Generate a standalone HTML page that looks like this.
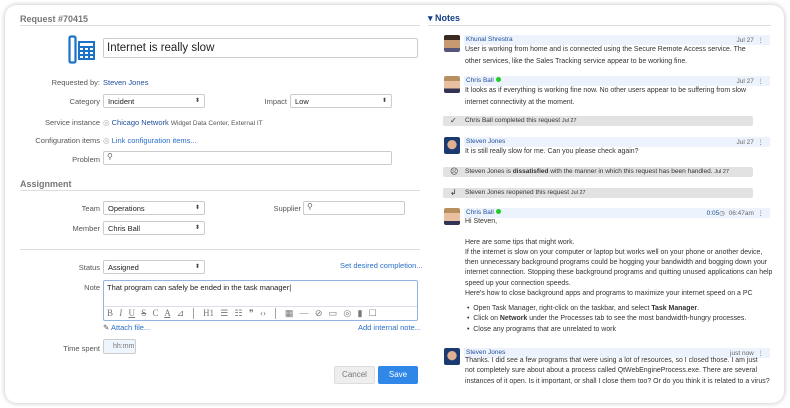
<!DOCTYPE html><html><head><meta charset="utf-8"><style>
*{box-sizing:border-box;margin:0;padding:0}
body{width:790px;height:408px;background:#fff;font-family:"Liberation Sans",sans-serif;position:relative;overflow:hidden;color:#222}
.card{position:absolute;left:5px;top:5px;width:779px;height:398px;border-radius:12px;box-shadow:0 0 4px 1px rgba(0,0,0,.18);background:#fff}
.a{position:absolute;white-space:nowrap}
.lbl{font-size:7.5px;color:#555;text-align:right;width:100px;left:0}
.h{font-size:9px;color:#777;font-weight:bold}
.hr{position:absolute;height:1px;background:#ddd}
.sel{position:absolute;height:14px;border:1px solid #ccc;border-radius:2px;font-size:7.5px;padding:2px 4px;background:#fff}
.sel:after{content:"⬍";position:absolute;right:4px;top:2px;font-size:6px;color:#444}
.inp{position:absolute;border:1px solid #ccc;border-radius:2px;background:#fff}
.lnk{color:#2a6fc9;font-size:7.5px}
.nm{color:#1f4e9a}
.bar{position:absolute;left:464px;width:306px;height:10px;background:#edf3fc;font-size:6.5px;padding:1px 2px;color:#1f4e9a}
.bar .r{position:absolute;right:6px;top:1px;color:#666}
.t{position:absolute;left:465px;font-size:6.95px;line-height:12.2px;color:#333;white-space:nowrap}
.ev{position:absolute;left:443px;width:310px;height:10px;background:#e2e2e2;border-radius:2px;font-size:6.5px;padding:1px 0 0 22px;color:#333;white-space:nowrap}
.ev i{position:absolute;left:7px;top:0;font-style:normal;font-size:8px}
.av{position:absolute;left:444px;width:16px;height:17px;border-radius:2px}
.dot{display:inline-block;width:5px;height:5px;border-radius:50%;background:#2c2;margin-left:2px}
</style></head><body>
<div class="card"></div>
<div class="a h" style="left:20px;top:14px">Request #70415</div>
<div class="hr" style="left:20px;top:25px;width:400px"></div>
<svg class="a" style="left:68px;top:35px" width="30" height="30"><rect x="1.5" y="1.5" width="6" height="26" rx="1.5" fill="none" stroke="#1a73c8" stroke-width="2.2"/><rect x="10" y="6" width="17" height="19" fill="#1a73c8"/><g fill="#fff"><rect x="12" y="8" width="13" height="3"/><rect x="12" y="13" width="3" height="2"/><rect x="17" y="13" width="3" height="2"/><rect x="22" y="13" width="3" height="2"/><rect x="12" y="17" width="3" height="2"/><rect x="17" y="17" width="3" height="2"/><rect x="22" y="17" width="3" height="2"/><rect x="12" y="21" width="3" height="2"/><rect x="17" y="21" width="3" height="2"/><rect x="22" y="21" width="3" height="2"/></g></svg>
<div class="inp" style="left:103px;top:38px;width:315px;height:20px;font-size:11.5px;padding:3px 3px">Internet is really slow</div>
<div class="a lbl" style="top:78px">Requested by:</div><div class="a nm" style="left:103px;top:78px;font-size:7.5px">Steven Jones</div>
<div class="a lbl" style="top:97px">Category</div><div class="sel" style="left:103px;top:94px;width:102px">Incident</div>
<div class="a lbl" style="top:97px;left:187px">Impact</div><div class="sel" style="left:290px;top:94px;width:102px">Low</div>
<div class="a lbl" style="top:118px">Service instance</div><div class="a" style="left:103px;top:118px;font-size:7.5px"><span style="color:#aaa">◎</span> <span class="nm">Chicago Network</span> <span style="font-size:6.5px;color:#555">Widget Data Center, External IT</span></div>
<div class="a lbl" style="top:136px">Configuration items</div><div class="a lnk" style="left:103px;top:136px"><span style="color:#aaa">◎</span> Link configuration items...</div>
<div class="a lbl" style="top:155px">Problem</div><div class="inp" style="left:103px;top:151px;width:289px;height:14px;font-size:8px;padding:0 3px;color:#666">⚲</div>
<div class="a h" style="left:20px;top:179px">Assignment</div>
<div class="hr" style="left:20px;top:190px;width:400px"></div>
<div class="a lbl" style="top:204px">Team</div><div class="sel" style="left:103px;top:201px;width:102px">Operations</div>
<div class="a lbl" style="top:204px;left:201px">Supplier</div><div class="inp" style="left:303px;top:201px;width:102px;height:14px;font-size:8px;padding:0 3px;color:#666">⚲</div>
<div class="a lbl" style="top:224px">Member</div><div class="sel" style="left:103px;top:221px;width:102px">Chris Ball</div>
<div class="hr" style="left:20px;top:249px;width:400px"></div>
<div class="a lbl" style="top:263px">Status</div><div class="sel" style="left:103px;top:260px;width:102px">Assigned</div>
<div class="a lnk" style="left:340px;top:261px">Set desired completion...</div>
<div class="a lbl" style="top:283px">Note</div>
<div class="inp" style="left:103px;top:280px;width:315px;height:41px;border-color:#8fb5e0;font-size:7.5px;padding:2px 3px">That program can safely be ended in the task manager|
<div style="position:absolute;left:0;right:0;top:25px;height:15px;border-top:1px solid #dde;font-size:9px;color:#777;padding:1px 3px;word-spacing:4px;font-family:'Liberation Serif',serif;white-space:nowrap">B <i>I</i> <u>U</u> <s>S</s> C <u>A</u> ⊿ │ H1 ☰ ☷ ❞ ‹› │ ▦ — ⊘ ▭ ◎ ▮ ☐</div></div>
<div class="a lnk" style="left:103px;top:323px"><span style="color:#555">✎</span> Attach file...</div>
<div class="a lnk" style="left:358px;top:323px">Add internal note...</div>
<div class="a lbl" style="top:344px">Time spent</div><div class="inp" style="left:103px;top:339px;width:33px;height:15px;background:#eef5fc;font-size:7px;color:#777;padding:3px 0 0 9px">hh:mm</div>
<div class="a" style="left:334px;top:366px;width:41px;height:18px;background:#eee;border:1px solid #ddd;border-radius:2px;font-size:8px;color:#777;text-align:center;line-height:16px">Cancel</div>
<div class="a" style="left:378px;top:366px;width:40px;height:18px;background:#2f87e8;border-radius:2px;font-size:8px;color:#fff;text-align:center;line-height:18px">Save</div>

<div class="a" style="left:428px;top:13px;font-size:9px;font-weight:bold;color:#173f86">▾ Notes</div>
<div class="hr" style="left:428px;top:25px;width:343px"></div>

<div class="av" style="top:35px;background:linear-gradient(#3a2a20 30%,#c89a70 30%,#c89a70 75%,#557 75%)"></div>
<div class="bar" style="top:35px">Khunal Shrestra<span class="r">Jul 27 &nbsp;⋮</span></div>
<div class="t" style="top:44px">User is working from home and is connected using the Secure Remote Access service. The<br>other services, like the Sales Tracking service appear to be working fine.</div>
<div class="av" style="top:76px;background:linear-gradient(#b89060 30%,#e8c0a0 30%,#e8c0a0 75%,#335 75%)"></div>
<div class="bar" style="top:76px">Chris Ball<span class="dot"></span><span class="r">Jul 27 &nbsp;⋮</span></div>
<div class="t" style="top:85px">It looks as if everything is working fine now. No other users appear to be suffering from slow<br>internet connectivity at the moment.</div>
<div class="ev" style="top:116px"><i>✓</i>Chris Ball completed this request <span style="font-size:5.5px">Jul 27</span></div>
<div class="av" style="top:137px;background:radial-gradient(circle at 50% 45%,#e0b090 35%,#1a3a70 40%)"></div>
<div class="bar" style="top:137px">Steven Jones<span class="r">Jul 27 &nbsp;⋮</span></div>
<div class="t" style="top:146px">It is still really slow for me. Can you please check again?</div>
<div class="ev" style="top:167px"><i>☹</i>Steven Jones is <b>dissatisfied</b> with the manner in which this request has been handled. <span style="font-size:5.5px">Jul 27</span></div>
<div class="ev" style="top:188px"><i>↲</i>Steven Jones reopened this request <span style="font-size:5.5px">Jul 27</span></div>
<div class="av" style="top:208px;background:linear-gradient(#b89060 30%,#e8c0a0 30%,#e8c0a0 75%,#335 75%)"></div>
<div class="bar" style="top:208px">Chris Ball<span class="dot"></span><span class="r"><span style="color:#1f4e9a">0:05</span>◷ &nbsp;06:47am &nbsp;⋮</span></div>
<div class="t" style="top:217px;line-height:10.3px">Hi Steven,<br><br>Here are some tips that might work.<br>If the internet is slow on your computer or laptop but works well on your phone or another device,<br>then unnecessary background programs could be hogging your bandwidth and bogging down your<br>internet connection. Stopping these background programs and quitting unused applications can help<br>speed up your connection speeds.<br>Here's how to close background apps and programs to maximize your internet speed on a PC</div>
<div class="t" style="top:304px;left:467px;line-height:10.3px">•&nbsp; Open Task Manager, right-click on the taskbar, and select <b>Task Manager</b>.<br>•&nbsp; Click on <b>Network</b> under the Processes tab to see the most bandwidth-hungry processes.<br>•&nbsp; Close any programs that are unrelated to work</div>
<div class="av" style="top:348px;background:radial-gradient(circle at 50% 45%,#e0b090 35%,#1a3a70 40%)"></div>
<div class="bar" style="top:348px">Steven Jones<span class="r">just now &nbsp;⋮</span></div>
<div class="t" style="top:356px;line-height:10.3px">Thanks. I did see a few programs that were using a lot of resources, so I closed those. I am just<br>not completely sure about about a process called QtWebEngineProcess.exe. There are several<br>instances of it open. Is it important, or shall I close them too? Or do you think it is related to a virus?</div>
</body></html>
